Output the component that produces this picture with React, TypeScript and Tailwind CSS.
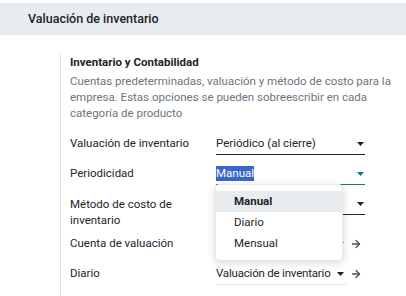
import {ArrowRight} from "lucide-react";

function Caret({teal = false}: {teal?: boolean}) {
    return (
        <svg width="7" height="4" viewBox="0 0 7 4" className="shrink-0">
            <path d="M0 0H7L3.5 4Z" fill={teal ? "#017e84" : "#1f2328"}/>
        </svg>
    );
}

function Arrow() {
    return <ArrowRight size={12} strokeWidth={2.6} className="text-[#495057] shrink-0"/>;
}

export default function App() {
    return (
        <div className="w-[406px] h-[296px] bg-white overflow-hidden relative text-[#212529]"
             style={{fontFamily: 'Roboto, "Noto Sans", sans-serif'}}>
            <div className="h-[3px]"/>
            <div className="h-[32px] bg-[#e9ecef] flex items-center pl-[28px] text-[12.5px] font-medium">
                Valuación de inventario
            </div>
            <div className="pl-[60px] pt-[18px]">
                <div className="border-l border-[#dee2e6] pl-[9px] pb-[8px]">
                    <div className="text-[11.5px] font-bold leading-[18px]">Inventario y Contabilidad</div>
                    <div className="text-[11.5px] text-[#6c757d] leading-[16px] mt-[2px] whitespace-nowrap">
                        Cuentas predeterminadas, valuación y método de costo para la<br/>
                        empresa. Estas opciones se pueden sobreescribir en cada<br/>
                        categoría de producto
                    </div>

                    <div className="mt-[8px] text-[11.5px] flex flex-col whitespace-nowrap">
                        <div className="flex items-center h-[30px]">
                            <div className="w-[146px] shrink-0">Valuación de inventario</div>
                            <div className="w-[149px] h-[22px] flex items-center justify-between border-b border-[#212529] pr-[1px]">
                                <span>Periódico (al cierre)</span>
                                <Caret/>
                            </div>
                        </div>
                        <div className="flex items-center h-[30px]">
                            <div className="w-[146px] shrink-0">Periodicidad</div>
                            <div className="w-[149px] h-[22px] flex items-center justify-between border-b border-[#017e84] pr-[1px]">
                                <span className="bg-[#3a66c9] text-white leading-[15px]">Manual</span>
                                <Caret teal/>
                            </div>
                        </div>
                        <div className="flex items-start h-[40px]">
                            <div className="w-[146px] shrink-0 leading-[16px] pt-[7px]">Método de costo de<br/>inventario</div>
                            <div className="w-[149px] h-[22px] mt-[4px] flex items-center justify-end border-b border-[#212529] pr-[1px]">
                                <Caret/>
                            </div>
                        </div>
                        <div className="flex items-center h-[30px]">
                            <div className="w-[130px] shrink-0 mr-[16px]">Cuenta de valuación</div>
                            <div className="w-[130px] h-[22px] flex items-center justify-end pr-[2px]">
                                <Caret/>
                            </div>
                            <div className="ml-[4px]"><Arrow/></div>
                        </div>
                        <div className="flex items-center h-[30px]">
                            <div className="w-[146px] shrink-0">Diario</div>
                            <div className="w-[130px] h-[22px] flex items-center gap-[4px] border-b border-[#dee2e6] pr-[2px]">
                                <span className="tracking-[-0.2px]">Valuación de inventario</span>
                                <span className="ml-auto flex"><Caret/></span>
                            </div>
                            <div className="ml-[4px]"><Arrow/></div>
                        </div>
                    </div>
                </div>
            </div>

            <div className="absolute left-[215px] top-[184px] w-[128px] bg-white rounded-[4px] border border-[#e5e7eb] shadow-[0_2px_8px_rgba(0,0,0,0.15)] py-[6px] text-[11.5px]">
                <div className="h-[21px] flex items-center pl-[18px] bg-[#e9ecef] font-bold">Manual</div>
                <div className="h-[21px] flex items-center pl-[18px]">Diario</div>
                <div className="h-[21px] flex items-center pl-[18px]">Mensual</div>
            </div>
        </div>
    );
}
